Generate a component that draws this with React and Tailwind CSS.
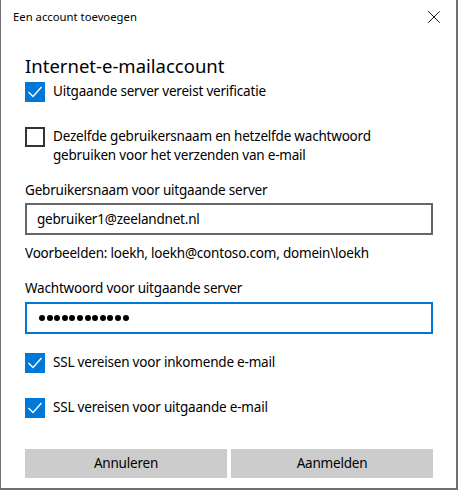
import { X } from "lucide-react";

function Check({ checked }) {
  if (!checked) {
    return <div className="w-[20px] h-[20px] shrink-0 border-2 border-[#333333] bg-white" />;
  }
  return (
    <div className="w-[20px] h-[20px] shrink-0 bg-[#0078d7] flex items-center justify-center">
      <svg width="20" height="20" viewBox="0 0 20 20">
        <polyline points="3.5,10 8,14.5 16.5,5" fill="none" stroke="#ffffff" strokeWidth="1.4" />
      </svg>
    </div>
  );
}

function CheckRow({ checked, children, className = "" }) {
  return (
    <div className={"flex items-start gap-[8px] " + className}>
      <Check checked={checked} />
      <div className="text-[13.5px] tracking-[-0.2px] leading-[19px] text-black">{children}</div>
    </div>
  );
}

export default function App() {
  const dots = Array.from({ length: 12 });

  return (
    <div
      className="w-[458px] h-[490px] bg-white border-l border-r-2 border-b-2 border-[#707070] flex flex-col overflow-hidden"
      style={{ fontFamily: '"Noto Sans", "Open Sans", sans-serif' }}
    >
      {/* title bar */}
      <div className="h-[34px] shrink-0 flex items-center justify-between pl-[12px] pr-[11px]">
        <span className="text-[11.3px] text-black">Een account toevoegen</span>
        <X size={22} strokeWidth={1} className="text-black" />
      </div>

      <div className="flex flex-col pl-6 w-[433px] text-[13.5px] tracking-[-0.2px] text-black">
        <h1 className="mt-[18px] text-[18.5px] tracking-normal leading-[28px] font-normal">Internet-e-mailaccount</h1>

        <CheckRow checked className="mt-[2px]">
          Uitgaande server vereist verificatie
        </CheckRow>

        <CheckRow checked={false} className="mt-[25px]">
          Dezelfde gebruikersnaam en hetzelfde wachtwoord
          <br />
          gebruiken voor het verzenden van e-mail
        </CheckRow>

        <label className="mt-[15px] leading-[20px]">Gebruikersnaam voor uitgaande server</label>
        <div className="mt-[3px] h-[32px] w-[408px] border-2 border-[#666666] flex items-center pl-[10px]">
          gebruiker1@zeelandnet.nl
        </div>

        <p className="mt-[8px] leading-[20px]">Voorbeelden: loekh, loekh@contoso.com, domein\loekh</p>

        <label className="mt-[15px] leading-[20px]">Wachtwoord voor uitgaande server</label>
        <div className="mt-[4px] h-[32px] w-[408px] border-2 border-[#0078d7] flex items-center pl-[12px] gap-[1.6px]">
          {dots.map((_, i) => (
            <span key={i} className="w-[6px] h-[6px] rounded-full bg-black" />
          ))}
        </div>

        <CheckRow checked className="mt-[19px]">
          SSL vereisen voor inkomende e-mail
        </CheckRow>

        <CheckRow checked className="mt-[25px]">
          SSL vereisen voor uitgaande e-mail
        </CheckRow>

        <div className="mt-[31px] flex gap-[4px] w-[408px]">
          <button className="flex-1 h-[29px] bg-[#cccccc] text-[13.5px] tracking-[-0.2px] text-black">Annuleren</button>
          <button className="flex-1 h-[29px] bg-[#cccccc] text-[13.5px] tracking-[-0.2px] text-black">Aanmelden</button>
        </div>
      </div>
    </div>
  );
}
